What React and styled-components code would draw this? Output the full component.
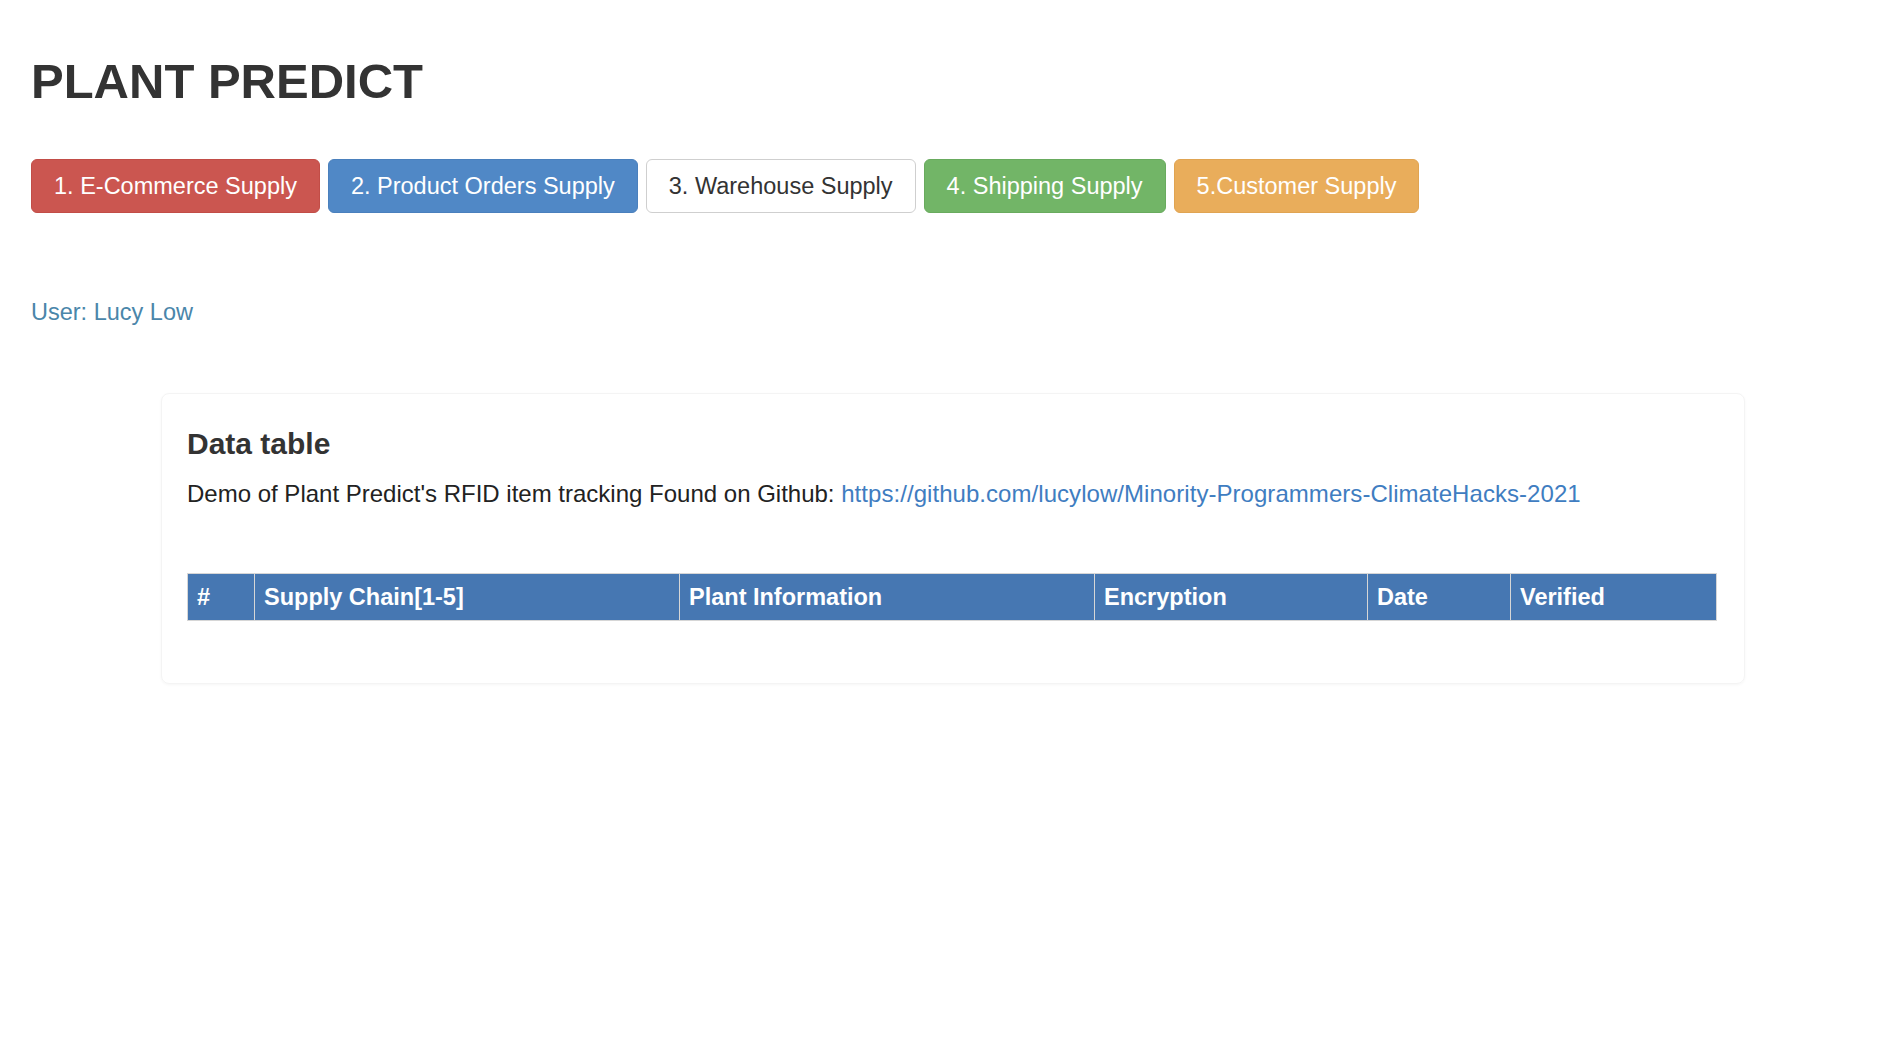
import React from "react";
import styled, { createGlobalStyle } from "styled-components";

const GlobalStyle = createGlobalStyle`
  html, body {
    margin: 0;
    padding: 0;
    background: #fff;
  }
  body {
    font-family: "Liberation Sans", Arial, Helvetica, sans-serif;
    color: #333;
  }
`;

const supplies = [
  { label: "1. E-Commerce Supply", tone: "danger" },
  { label: "2. Product Orders Supply", tone: "primary" },
  { label: "3. Warehouse Supply", tone: "default" },
  { label: "4. Shipping Supply", tone: "success" },
  { label: "5.Customer Supply", tone: "warning" },
];

const tones = {
  danger: { bg: "#cb5650", border: "#c24d47", color: "#fff" },
  primary: { bg: "#5088c6", border: "#4a80bd", color: "#fff" },
  default: { bg: "#fff", border: "#cfcfcf", color: "#333" },
  success: { bg: "#72b567", border: "#69ab5e", color: "#fff" },
  warning: { bg: "#e9ad5b", border: "#e0a452", color: "#fff" },
};

const columns = [
  { title: "#", width: 67 },
  { title: "Supply Chain[1-5]", width: 425 },
  { title: "Plant Information", width: 415 },
  { title: "Encryption", width: 273 },
  { title: "Date", width: 143 },
  { title: "Verified", width: 206 },
];

const App = () => {
  return (
    <Page>
      <GlobalStyle />
      <Title>PLANT PREDICT</Title>
      <Toolbar>
        {supplies.map((s) => (
          <SupplyButton key={s.label} $tone={s.tone}>
            {s.label}
          </SupplyButton>
        ))}
      </Toolbar>
      <UserLine>User: Lucy Low</UserLine>
      <Card>
        <CardTitle>Data table</CardTitle>
        <Description>
          Demo of Plant Predict's RFID item tracking Found on Github:{" "}
          <Link href="#">
            https://github.com/lucylow/Minority-Programmers-ClimateHacks-2021
          </Link>
        </Description>
        <Table>
          <colgroup>
            {columns.map((c) => (
              <col key={c.title} style={{ width: c.width }} />
            ))}
          </colgroup>
          <thead>
            <tr>
              {columns.map((c) => (
                <HeadCell key={c.title}>{c.title}</HeadCell>
              ))}
            </tr>
          </thead>
        </Table>
      </Card>
    </Page>
  );
};

const Page = styled.div`
  min-height: 100vh;
  padding: 54px 0 0 31px;
  box-sizing: border-box;
`;

const Title = styled.h1`
  margin: 0;
  font-size: 49px;
  line-height: 54px;
  font-weight: 700;
  color: #333;
`;

const Toolbar = styled.div`
  display: flex;
  gap: 8px;
  margin-top: 51px;
`;

const SupplyButton = styled.button`
  font-family: inherit;
  font-size: 23.5px;
  line-height: 32px;
  padding: 10px 22px;
  border-radius: 6px;
  border: 1px solid ${({ $tone }) => tones[$tone].border};
  background: ${({ $tone }) => tones[$tone].bg};
  color: ${({ $tone }) => tones[$tone].color};
  cursor: pointer;
`;

const UserLine = styled.div`
  margin-top: 85px;
  font-size: 23.5px;
  line-height: 28px;
  color: #4a86aa;
`;

const Card = styled.div`
  margin: 67px 0 0 130px;
  width: 1584px;
  box-sizing: border-box;
  padding: 34px 28px 62px 25px;
  border: 1px solid #f4f4f4;
  border-radius: 8px;
  box-shadow: 0 1px 3px rgba(0, 0, 0, 0.04);
`;

const CardTitle = styled.h3`
  margin: 0;
  font-size: 30px;
  line-height: 32px;
  font-weight: 700;
  color: #333;
`;

const Description = styled.p`
  margin: 17px 0 0;
  font-size: 24px;
  line-height: 34px;
  color: #222;
`;

const Link = styled.a`
  color: #3f7dc1;
  text-decoration: none;
  letter-spacing: 0.05px;
`;

const Table = styled.table`
  margin-top: 62px;
  width: 1529px;
  table-layout: fixed;
  border-collapse: collapse;
  border: 1px solid #dcdcdc;
`;

const HeadCell = styled.th`
  background: #4677b2;
  color: #fff;
  text-align: left;
  font-size: 23.5px;
  font-weight: 700;
  line-height: 28px;
  padding: 9px 9px;
  border: 1px solid #d6d6d6;
`;

export default App;
